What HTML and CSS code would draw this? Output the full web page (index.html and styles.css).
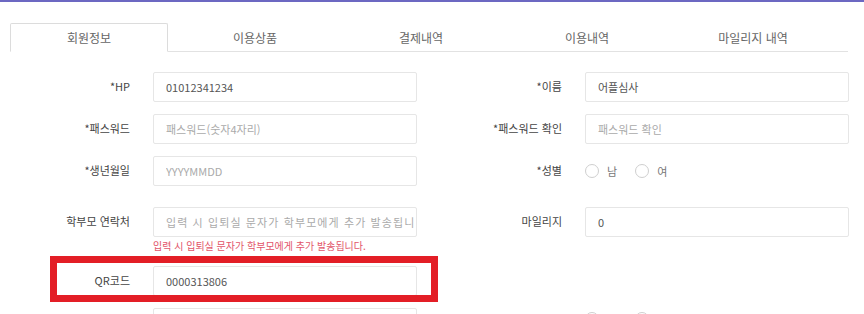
FILE: index.html
```html
<!DOCTYPE html>
<html lang="ko">
<head>
    <meta charset="UTF-8">
    <meta name="viewport" content="width=device-width, initial-scale=1.0">
    <title>회원정보</title>
    <link rel="stylesheet" href="styles.css">
</head>
<body>
    <div class="topbar"></div>

    <!-- Tabs -->
    <ul class="tabs">
        <li class="tab active">회원정보</li>
        <li class="tab">이용상품</li>
        <li class="tab">결제내역</li>
        <li class="tab">이용내역</li>
        <li class="tab">마일리지 내역</li>
    </ul>

    <!-- Member form -->
    <div class="form">
        <div class="row">
            <div class="field">
                <label class="label">*HP</label>
                <input class="input" type="text" value="01012341234">
            </div>
            <div class="field">
                <label class="label">*이름</label>
                <input class="input" type="text" value="어플심사">
            </div>
        </div>
        <div class="row">
            <div class="field">
                <label class="label">*패스워드</label>
                <input class="input" type="password" placeholder="패스워드(숫자4자리)">
            </div>
            <div class="field">
                <label class="label">*패스워드 확인</label>
                <input class="input" type="password" placeholder="패스워드 확인">
            </div>
        </div>
        <div class="row row-gender">
            <div class="field">
                <label class="label">*생년월일</label>
                <input class="input" type="text" placeholder="YYYYMMDD">
            </div>
            <div class="field">
                <label class="label">*성별</label>
                <div class="radios">
                    <label class="radio"><input type="radio" name="gender"> 남</label>
                    <label class="radio"><input type="radio" name="gender"> 여</label>
                </div>
            </div>
        </div>
        <div class="row row-help">
            <div class="field">
                <label class="label">학부모 연락처</label>
                <div class="control">
                    <input class="input input-wide" type="text" placeholder="입력 시 입퇴실 문자가 학부모에게 추가 발송됩니다.">
                    <p class="help">입력 시 입퇴실 문자가 학부모에게 추가 발송됩니다.</p>
                </div>
            </div>
            <div class="field">
                <label class="label">마일리지</label>
                <input class="input" type="text" value="0">
            </div>
        </div>
        <div class="row">
            <div class="field">
                <label class="label">QR코드</label>
                <input class="input" type="text" value="0000313806">
            </div>
            <div class="field"></div>
        </div>
        <div class="row">
            <div class="field">
                <label class="label"></label>
                <input class="input" type="text">
            </div>
            <div class="field">
                <label class="label"></label>
                <div class="radios radios-top">
                    <label class="radio"><input type="radio" name="agree"> 예</label>
                    <label class="radio"><input type="radio" name="agree"> 아니오</label>
                </div>
            </div>
        </div>
    </div>

    <div class="highlight"></div>
</body>
</html>
```

FILE: styles.css
```css
html, body {
    margin: 0;
    padding: 0;
    overflow: hidden;
}
body {
    font-family: "Noto Sans CJK KR", "Noto Sans", sans-serif;
    background-color: #ffffff;
    color: #333;
    position: relative;
}
.topbar {
    height: 2px;
    background-color: #6c68c2;
}
.tabs {
    list-style: none;
    display: flex;
    gap: 8px;
    margin: 21px 16px 0 10px;
    padding: 0;
    height: 28px;
    border-bottom: 1px solid #e2e2e2;
}
.tab {
    box-sizing: border-box;
    width: 158px;
    height: 29px;
    line-height: 27px;
    text-align: center;
    font-size: 12px;
    color: #666;
    border: 1px solid transparent;
    border-radius: 2px 2px 0 0;
}
.tab.active {
    background: #fff;
    border-color: #dcdcdc #dcdcdc #fff;
}
.form {
    margin-top: 20px;
}
.row {
    display: flex;
    margin-bottom: 12px;
}
.row-gender {
    margin-bottom: 21px;
}
.row-help {
    margin-bottom: 13px;
}
.field {
    width: 432px;
    display: flex;
    align-items: flex-start;
}
.label {
    width: 130px;
    margin-right: 23px;
    text-align: right;
    font-size: 11px;
    line-height: 28px;
    color: #444;
}
.input {
    box-sizing: border-box;
    width: 264px;
    height: 30px;
    padding: 0 12px;
    margin: 0;
    font-family: inherit;
    font-size: 11px;
    color: #555;
    border: 1px solid #e6e6e6;
    border-radius: 2px;
    background: #fff;
    outline: none;
}
.input::placeholder {
    color: #aaa;
}
.input-wide {
    padding-right: 2px;
    letter-spacing: 1.1px;
}
.control {
    width: 264px;
}
.help {
    margin: 2px 0 0;
    font-size: 10px;
    line-height: 14px;
    color: #e25469;
    white-space: nowrap;
}
.radios {
    display: flex;
    align-items: center;
    height: 30px;
    gap: 18px;
}
.radios-top {
    height: auto;
    padding-top: 3px;
}
.radio {
    display: flex;
    align-items: center;
    gap: 8px;
    font-size: 11px;
    color: #777;
}
.radio input {
    appearance: none;
    width: 14px;
    height: 14px;
    margin: 0;
    border: 1px solid #cfcfcf;
    border-radius: 50%;
    background: #fff;
}
.highlight {
    position: absolute;
    left: 50px;
    top: 256px;
    width: 374px;
    height: 32px;
    border: 7px solid #e31e26;
}
```
